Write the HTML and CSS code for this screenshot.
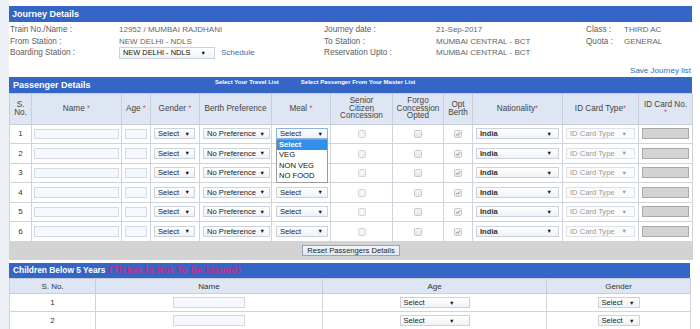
FILE: index.html
```html
<!DOCTYPE html>
<html>
<head>
<meta charset="utf-8">
<title>Passenger Details</title>
<link rel="stylesheet" href="styles.css">
</head>
<body>
<div class="page">
  <div class="strip"></div>
  <div class="main">
    <section class="journey">
      <div class="bar">Journey Details</div>
      <div class="jgrid">
        <span class="lbl">Train No./Name :</span><span class="val">12952 / MUMBAI RAJDHANI</span>
        <span class="lbl">Journey date :</span><span class="val">21-Sep-2017</span>
        <span class="lbl">Class :</span><span class="val">THIRD AC</span>

        <span class="lbl">From Station :</span><span class="val">NEW DELHI - NDLS</span>
        <span class="lbl">To Station :</span><span class="val">MUMBAI CENTRAL - BCT</span>
        <span class="lbl">Quota :</span><span class="val">GENERAL</span>

        <span class="lbl">Boarding Station :</span>
        <span class="val board-cell"><span class="sel board"><span class="st">NEW DELHI - NDLS</span><span class="ar">▼</span></span><a class="link sched">Schedule</a></span>
        <span class="lbl">Reservation Upto :</span><span class="val">MUMBAI CENTRAL - BCT</span>
        <span></span><span></span>
      </div>
      <div class="save"><a class="link">Save Journey list</a></div>
    </section>

    <section class="pass">
      <div class="bar pbar">
        <span class="ptitle">Passenger Details</span>
        <span class="plinks"><a>Select Your Travel List</a><a>Select Passenger From Your Master List</a></span>
      </div>
      <table class="ptable">
        <colgroup>
          <col class="c-sno"><col class="c-name"><col class="c-age"><col class="c-gen"><col class="c-berth"><col class="c-meal">
          <col class="c-sen"><col class="c-forgo"><col class="c-opt"><col class="c-nat"><col class="c-idt"><col class="c-idn">
        </colgroup>
        <thead>
          <tr>
            <th>S.<br>No.</th>
            <th>Name <span class="req">*</span></th>
            <th>Age <span class="req">*</span></th>
            <th>Gender <span class="req">*</span></th>
            <th>Berth Preference</th>
            <th>Meal <span class="req">*</span></th>
            <th>Senior<br>Citizen<br>Concession</th>
            <th>Forgo<br>Concession<br>Opted</th>
            <th>Opt<br>Berth</th>
            <th>Nationality<span class="req">*</span></th>
            <th>ID Card Type<span class="req">*</span></th>
            <th class="top">ID Card No.<br><span class="req">*</span></th>
          </tr>
        </thead>
        <tbody>
          <tr>
            <td class="num">1</td>
            <td><span class="inp name"></span></td>
            <td><span class="inp age"></span></td>
            <td><span class="sel gen"><span class="st">Select</span><span class="ar">▼</span></span></td>
            <td><span class="sel berth"><span class="st">No Preference</span><span class="ar">▼</span></span></td>
            <td class="meal-cell">
              <span class="dd">
                <span class="sel meal focus"><span class="st">Select</span><span class="ar">▼</span></span>
                <span class="ddlist">
                  <span class="opt hl">Select</span>
                  <span class="opt">VEG</span>
                  <span class="opt">NON VEG</span>
                  <span class="opt">NO FOOD</span>
                </span>
              </span>
            </td>
            <td class="ctr"><span class="cb light"></span></td>
            <td class="ctr"><span class="cb"></span></td>
            <td class="ctr"><span class="cb"><svg viewBox="0 0 8 8"><path d="M1.6 4.2 L3.3 5.9 L6.6 1.9" fill="none" stroke="#7d7d7d" stroke-width="1.2"/></svg></span></td>
            <td><span class="sel nat"><span class="st">India</span><span class="ar">▼</span></span></td>
            <td><span class="sel idt"><span class="st">ID Card Type</span><span class="ar">▼</span></span></td>
            <td><span class="inp idn"></span></td>
          </tr>
          <tr>
            <td class="num">2</td>
            <td><span class="inp name"></span></td>
            <td><span class="inp age"></span></td>
            <td><span class="sel gen"><span class="st">Select</span><span class="ar">▼</span></span></td>
            <td><span class="sel berth"><span class="st">No Preference</span><span class="ar">▼</span></span></td>
            <td class="meal-cell"><span class="sel meal covered"></span></td>
            <td class="ctr"><span class="cb light"></span></td>
            <td class="ctr"><span class="cb"></span></td>
            <td class="ctr"><span class="cb"><svg viewBox="0 0 8 8"><path d="M1.6 4.2 L3.3 5.9 L6.6 1.9" fill="none" stroke="#7d7d7d" stroke-width="1.2"/></svg></span></td>
            <td><span class="sel nat"><span class="st">India</span><span class="ar">▼</span></span></td>
            <td><span class="sel idt"><span class="st">ID Card Type</span><span class="ar">▼</span></span></td>
            <td><span class="inp idn"></span></td>
          </tr>
          <tr>
            <td class="num">3</td>
            <td><span class="inp name"></span></td>
            <td><span class="inp age"></span></td>
            <td><span class="sel gen"><span class="st">Select</span><span class="ar">▼</span></span></td>
            <td><span class="sel berth"><span class="st">No Preference</span><span class="ar">▼</span></span></td>
            <td class="meal-cell"><span class="sel meal covered"></span></td>
            <td class="ctr"><span class="cb light"></span></td>
            <td class="ctr"><span class="cb"></span></td>
            <td class="ctr"><span class="cb"><svg viewBox="0 0 8 8"><path d="M1.6 4.2 L3.3 5.9 L6.6 1.9" fill="none" stroke="#7d7d7d" stroke-width="1.2"/></svg></span></td>
            <td><span class="sel nat"><span class="st">India</span><span class="ar">▼</span></span></td>
            <td><span class="sel idt"><span class="st">ID Card Type</span><span class="ar">▼</span></span></td>
            <td><span class="inp idn"></span></td>
          </tr>
          <tr>
            <td class="num">4</td>
            <td><span class="inp name"></span></td>
            <td><span class="inp age"></span></td>
            <td><span class="sel gen"><span class="st">Select</span><span class="ar">▼</span></span></td>
            <td><span class="sel berth"><span class="st">No Preference</span><span class="ar">▼</span></span></td>
            <td class="meal-cell"><span class="sel meal"><span class="st">Select</span><span class="ar">▼</span></span></td>
            <td class="ctr"><span class="cb light"></span></td>
            <td class="ctr"><span class="cb"></span></td>
            <td class="ctr"><span class="cb"><svg viewBox="0 0 8 8"><path d="M1.6 4.2 L3.3 5.9 L6.6 1.9" fill="none" stroke="#7d7d7d" stroke-width="1.2"/></svg></span></td>
            <td><span class="sel nat"><span class="st">India</span><span class="ar">▼</span></span></td>
            <td><span class="sel idt"><span class="st">ID Card Type</span><span class="ar">▼</span></span></td>
            <td><span class="inp idn"></span></td>
          </tr>
          <tr>
            <td class="num">5</td>
            <td><span class="inp name"></span></td>
            <td><span class="inp age"></span></td>
            <td><span class="sel gen"><span class="st">Select</span><span class="ar">▼</span></span></td>
            <td><span class="sel berth"><span class="st">No Preference</span><span class="ar">▼</span></span></td>
            <td class="meal-cell"><span class="sel meal"><span class="st">Select</span><span class="ar">▼</span></span></td>
            <td class="ctr"><span class="cb light"></span></td>
            <td class="ctr"><span class="cb"></span></td>
            <td class="ctr"><span class="cb"><svg viewBox="0 0 8 8"><path d="M1.6 4.2 L3.3 5.9 L6.6 1.9" fill="none" stroke="#7d7d7d" stroke-width="1.2"/></svg></span></td>
            <td><span class="sel nat"><span class="st">India</span><span class="ar">▼</span></span></td>
            <td><span class="sel idt"><span class="st">ID Card Type</span><span class="ar">▼</span></span></td>
            <td><span class="inp idn"></span></td>
          </tr>
          <tr>
            <td class="num">6</td>
            <td><span class="inp name"></span></td>
            <td><span class="inp age"></span></td>
            <td><span class="sel gen"><span class="st">Select</span><span class="ar">▼</span></span></td>
            <td><span class="sel berth"><span class="st">No Preference</span><span class="ar">▼</span></span></td>
            <td class="meal-cell"><span class="sel meal"><span class="st">Select</span><span class="ar">▼</span></span></td>
            <td class="ctr"><span class="cb light"></span></td>
            <td class="ctr"><span class="cb"></span></td>
            <td class="ctr"><span class="cb"><svg viewBox="0 0 8 8"><path d="M1.6 4.2 L3.3 5.9 L6.6 1.9" fill="none" stroke="#7d7d7d" stroke-width="1.2"/></svg></span></td>
            <td><span class="sel nat"><span class="st">India</span><span class="ar">▼</span></span></td>
            <td><span class="sel idt"><span class="st">ID Card Type</span><span class="ar">▼</span></span></td>
            <td><span class="inp idn"></span></td>
          </tr>
          <tr class="reset-row">
            <td colspan="12"><span class="btn">Reset Passengers Details</span></td>
          </tr>
        </tbody>
      </table>
    </section>

    <section class="kids">
      <div class="bar kbar">Children Below 5 Years <span class="warn">(Ticket Is Not To Be Issued)</span></div>
      <table class="ktable">
        <colgroup><col class="k-sno"><col class="k-name"><col class="k-age"><col class="k-gen"></colgroup>
        <thead>
          <tr><th>S. No.</th><th>Name</th><th>Age</th><th>Gender</th></tr>
        </thead>
        <tbody>
          <tr>
            <td>1</td>
            <td><span class="inp kname"></span></td>
            <td><span class="sel kage"><span class="st">Select</span><span class="ar">▼</span></span></td>
            <td><span class="sel kgen"><span class="st">Select</span><span class="ar">▼</span></span></td>
          </tr>
          <tr>
            <td>2</td>
            <td><span class="inp kname"></span></td>
            <td><span class="sel kage"><span class="st">Select</span><span class="ar">▼</span></span></td>
            <td><span class="sel kgen"><span class="st">Select</span><span class="ar">▼</span></span></td>
          </tr>
        </tbody>
      </table>
    </section>
  </div>
</div>
</body>
</html>
```

FILE: styles.css
```css
* { box-sizing: border-box; }

body {
  margin: 0;
  background: #fff;
  font-family: "Liberation Sans", Arial, sans-serif;
  color: #555;
}

.page {
  display: flex;
  min-height: 329px;
}

.strip {
  flex: none;
  width: 9px;
  background: #edf1f6;
}

.main {
  flex: none;
  width: 683px;
  padding-top: 6px;
}

.bar {
  background: #3566c6;
  color: #fff;
  font-weight: bold;
  font-size: 9px;
  height: 16px;
  line-height: 16px;
  padding-left: 3px;
}

/* Journey details */
.jgrid {
  display: grid;
  grid-template-columns: 109px 205px 112px 150px 38px 1fr;
  grid-auto-rows: 11.5px;
  align-items: center;
  padding: 2px 0 0 1px;
}

.lbl {
  font-size: 8.2px;
  color: #5c5c5c;
  white-space: nowrap;
}

.val {
  font-size: 8px;
  color: #666;
  white-space: nowrap;
}

.board-cell {
  display: flex;
  align-items: center;
  gap: 6px;
}

.link {
  color: #2f6db5;
  font-size: 8px;
}

.save {
  margin-top: 4px;
  height: 10px;
  line-height: 10px;
  text-align: right;
  padding-right: 1px;
}

/* Fake select / input controls */
.sel {
  display: inline-flex;
  align-items: center;
  justify-content: space-between;
  height: 11px;
  border: 1px solid #cbd2dc;
  background: linear-gradient(#ffffff, #eef2f7);
  font-size: 7.6px;
  color: #222;
  padding: 0 4px 0 3px;
  vertical-align: middle;
  white-space: nowrap;
}

.sel .ar {
  font-size: 5.5px;
  color: #111;
}

.sel.board { width: 96px; height: 12px; font-size: 7.4px; color: #111; }
.sel.board .ar { margin-right: 4px; }
.sel.gen { width: 41px; }
.sel.berth { width: 67px; }
.sel.meal { width: 52px; }
.sel.meal.focus { border-color: #8fb2dc; }
.sel.nat { width: 83px; font-weight: bold; color: #333; }
.sel.nat .ar { margin-right: 2px; }
.sel.idt { width: 69px; color: #9a9a9a; border-color: #dde2e8; background: #fafbfc; }
.sel.idt .ar { color: #999; margin-right: 3px; }
.sel.kage { width: 70px; }
.sel.kage .ar { margin-right: 10px; }
.sel.kgen { width: 42px; }

.inp {
  display: inline-block;
  height: 10.5px;
  border: 1px solid #d2d9e2;
  background: #f5f8fc;
  vertical-align: middle;
}

.inp.name { width: 85px; margin-left: -1px; }
.inp.age { width: 22px; }
.inp.idn { width: 47px; height: 11px; background: #d3d3d3; border-color: #a9a9a9; }
.inp.kname { width: 72px; }

.cb {
  display: inline-block;
  width: 8px;
  height: 8px;
  border: 1px solid #c9c9c9;
  border-radius: 1.5px;
  background: linear-gradient(#f6f6f6, #e6e6e6);
  vertical-align: middle;
}

.cb.light {
  background: #fafafa;
  box-shadow: inset 0 0 0 1.5px #f0f0f0;
  border-color: #d5d5d5;
}

.cb svg {
  display: block;
  width: 100%;
  height: 100%;
}

/* Passenger section */
.pass {
  margin-top: 4px;
}

.pbar {
  display: flex;
  align-items: flex-start;
  padding-left: 4px;
}

.ptitle {
  width: 202px;
}

.plinks {
  display: flex;
  gap: 22px;
  font-size: 6px;
  line-height: 8px;
  padding-top: 1px;
}

.ptable {
  border-collapse: collapse;
  table-layout: fixed;
  width: 683px;
  font-size: 8.2px;
}

.c-sno { width: 22px; }
.c-name { width: 90px; }
.c-age { width: 29px; }
.c-gen { width: 49px; }
.c-berth { width: 72px; }
.c-meal { width: 59px; }
.c-sen { width: 62px; }
.c-forgo { width: 51px; }
.c-opt { width: 29px; }
.c-nat { width: 90px; }
.c-idt { width: 76px; }
.c-idn { width: 54px; }

.ptable th {
  background: #dde6f2;
  color: #444;
  font-weight: normal;
  height: 31px;
  line-height: 7.6px;
  border: 1px solid #c7ced8;
  text-align: center;
  vertical-align: middle;
  padding: 0;
}

.ptable td {
  border: 1px solid #cfd4db;
  height: 19.5px;
  padding: 0 0 0 3px;
  text-align: left;
  vertical-align: middle;
  background: #fff;
}

.ptable td.num {
  text-align: center;
  padding: 0;
  color: #333;
  font-size: 8px;
}

.ptable td.ctr {
  text-align: center;
  padding: 0;
}

.ptable td.meal-cell {
  padding-left: 4px;
}

.req {
  color: #e35a5a;
}

.dd {
  position: relative;
  display: inline-block;
  vertical-align: middle;
}

.ddlist {
  position: absolute;
  left: 0;
  top: 11px;
  width: 52px;
  border: 1px solid #9a9a9a;
  background: #fff;
  display: flex;
  flex-direction: column;
  padding: 0 0 1px;
  z-index: 2;
}

.opt {
  height: 10.2px;
  line-height: 10.2px;
  font-size: 7.6px;
  color: #111;
  padding-left: 2px;
}

.opt.hl {
  background: #3390ea;
  color: #fff;
  font-weight: bold;
}

.reset-row td {
  background: #d3d3d3;
  height: 18px;
  text-align: center;
  padding: 0;
}

.btn {
  display: inline-block;
  height: 11px;
  line-height: 9px;
  padding: 0 4px;
  border: 1px solid #95a5b8;
  background: linear-gradient(#f3f6fa, #dfe6ef);
  font-size: 7.6px;
  color: #1f1f1f;
  vertical-align: middle;
}

/* Children section */
.kids {
  margin-top: 3px;
  width: 681px;
}

.kbar {
  height: 15.5px;
  line-height: 15.5px;
  font-size: 8.4px;
  padding-left: 4px;
}

.warn {
  font-family: "DejaVu Sans", Verdana, sans-serif;
  color: #b7338f;
  font-size: 8.6px;
  margin-left: 1px;
}

.ktable {
  border-collapse: collapse;
  table-layout: fixed;
  width: 681px;
  font-size: 8px;
}

.k-sno { width: 86px; }
.k-name { width: 227px; }
.k-age { width: 224px; }
.k-gen { width: 144px; }

.ktable th {
  background: #dde6f2;
  color: #333;
  font-weight: normal;
  height: 15px;
  border: 1px solid #c7ced8;
  text-align: center;
  padding: 0;
}

.ktable td {
  border: 1px solid #cfd4db;
  height: 18px;
  text-align: center;
  vertical-align: middle;
  padding: 0;
  color: #333;
}
```
